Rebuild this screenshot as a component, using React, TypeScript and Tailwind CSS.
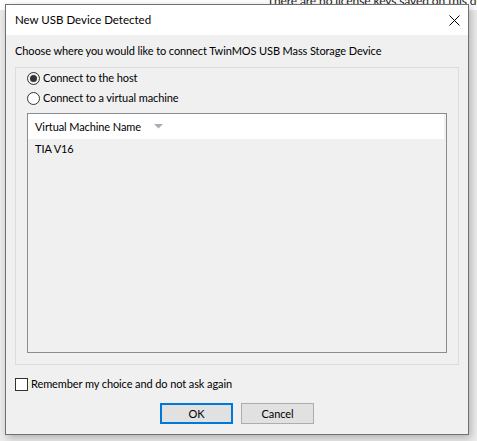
export default function App() {
  return (
    <div
      className="relative w-[477px] h-[441px] overflow-hidden bg-[#ececec] pl-[5px] pt-[4px] text-[11px] leading-[16px] tracking-[-0.1px] text-black"
      style={{ fontFamily: 'Lato, "Noto Sans", sans-serif' }}
    >
      {/* window behind the dialog */}
      <div className="absolute inset-x-0 top-0 h-[10px] bg-white">
        <span className="absolute left-[267px] top-[-7px] whitespace-nowrap text-[12px] text-[#222]">
          There are no license keys saved on this device
        </span>
      </div>

      <div className="relative flex w-[464px] flex-col border border-[#707070] bg-[#f0f0f0] shadow-[2px_3px_8px_rgba(0,0,0,0.25)]">
        {/* title bar */}
        <div className="flex h-[30px] items-center justify-between bg-white pl-[9px] pr-[8px]">
          <span className="text-[11.5px] tracking-normal">New USB Device Detected</span>
          <svg width="11" height="11" viewBox="0 0 11 11" className="text-black">
            <path d="M0.5 0.5 L10.5 10.5 M10.5 0.5 L0.5 10.5" stroke="currentColor" strokeWidth="1" />
          </svg>
        </div>

        {/* body */}
        <div className="flex flex-col px-[9px] pt-[8px] pb-[10px]">
          <p>Choose where you would like to connect TwinMOS USB Mass Storage Device</p>

          <div className="mt-[8px] flex h-[298px] flex-col border border-[#dcdcdc] px-[11px] pb-[11px]">
            <label className="flex h-[20px] items-center gap-[3px]">
              <span className="flex h-[13px] w-[13px] items-center justify-center rounded-full border border-[#333]">
                <span className="h-[7px] w-[7px] rounded-full bg-[#333]" />
              </span>
              Connect to the host
            </label>
            <label className="flex h-[20px] items-center gap-[3px]">
              <span className="h-[13px] w-[13px] rounded-full border border-[#333] bg-white" />
              Connect to a virtual machine
            </label>

            {/* list view */}
            <div className="mt-[5px] flex flex-1 flex-col border border-[#888c93]">
              <div className="mr-[2px] flex h-[25px] items-center bg-white pl-[7px]">
                <span>Virtual Machine Name</span>
                <svg width="9" height="5" viewBox="0 0 9 5" className="ml-[13px]">
                  <path d="M0 0 H9 L4.5 4.5 Z" fill="#a9aeb5" />
                </svg>
              </div>
              <div className="flex h-[20px] items-center pl-[7px]">TIA V16</div>
            </div>
          </div>

          <label className="mt-[9px] flex h-[20px] items-center gap-[3px]">
            <span className="h-[13px] w-[13px] border border-[#333] bg-white" />
            Remember my choice and do not ask again
          </label>

          <div className="mt-[9px] flex justify-center gap-[8px]">
            <button className="h-[21px] w-[73px] border-2 border-[#0078d7] bg-[#e1e1e1]">OK</button>
            <button className="h-[21px] w-[73px] border border-[#adadad] bg-[#e1e1e1]">Cancel</button>
          </div>
        </div>
      </div>
    </div>
  );
}
